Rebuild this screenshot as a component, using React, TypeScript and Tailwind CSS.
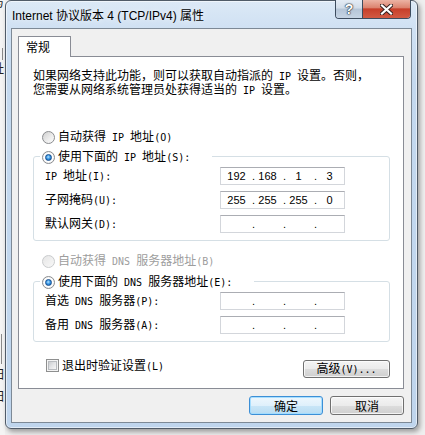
import React from "react";

function T({ s }: { s: string }) {
  const parts = s.match(/[\x20-\x7e]+|[^\x20-\x7e]+/g) || [];
  return (
    <>
      {parts.map((p, i) =>
        /^[\x20-\x7e]+$/.test(p) ? (
          <span key={i} className="whitespace-pre font-['DejaVu_Sans_Mono',monospace] text-[10px]">
            {p}
          </span>
        ) : (
          <span key={i}>{p}</span>
        )
      )}
    </>
  );
}

function Radio({ checked, disabled }: { checked?: boolean; disabled?: boolean }) {
  if (disabled) {
    return (
      <span className="inline-flex h-[13px] w-[13px] shrink-0 rounded-full border border-[#c9cbcd] bg-[linear-gradient(135deg,#e6e6e6,#f8f8f8)]" />
    );
  }
  return (
    <span
      className={
        "inline-flex h-[13px] w-[13px] shrink-0 items-center justify-center rounded-full border border-[#8a8c8f] " +
        (checked
          ? "bg-[radial-gradient(circle,#ffffff_55%,#d6d6d6_100%)]"
          : "bg-[linear-gradient(135deg,#cfcfcf_0%,#eeeeee_60%,#fbfbfb_100%)]")
      }
    >
      {checked && (
        <span className="h-[7px] w-[7px] rounded-full border border-[#174f8f] bg-[radial-gradient(circle_at_45%_40%,#b8e4ff_0%,#3b99e6_45%,#0e58a8_100%)]" />
      )}
    </span>
  );
}

function IPBox({ v }: { v?: string[] }) {
  return (
    <div className="flex h-[18px] w-[125px] items-center border border-[#d3d6db] border-t-[#abadb3] bg-white pl-[3px] font-['Liberation_Sans',sans-serif] text-[11px] leading-none text-black">
      {[0, 1, 2, 3].map((i) => (
        <React.Fragment key={i}>
          {i > 0 && <span className="w-[6px] text-right">.</span>}
          <span className="w-[25px] text-center">{v ? v[i] : ""}</span>
        </React.Fragment>
      ))}
    </div>
  );
}

function Row({ label, v, first }: { label: string; v?: string[]; first?: boolean }) {
  return (
    <div className={"flex h-[18px] items-center " + (first ? "mt-[2px]" : "mt-[6px]")}>
      <div className="ml-[11px] w-[175px] leading-[16px]">
        <T s={label} />
      </div>
      <IPBox v={v} />
    </div>
  );
}

function Legend({ text }: { text: string }) {
  return (
    <div className="-mt-[8px] ml-[6px] flex h-[16px] w-fit items-center gap-[3px] bg-white pl-[2px] pr-[22px] leading-[16px]">
      <Radio checked />
      <span>
        <T s={text} />
      </span>
    </div>
  );
}

function WinButton({ children, def, w, h }: { children: React.ReactNode; def?: boolean; w: string; h: string }) {
  return (
    <div
      className={
        "flex items-center justify-center rounded-[3px] border leading-none " +
        w +
        " " +
        h +
        " " +
        (def
          ? "border-[#3c8fd6] bg-[linear-gradient(to_bottom,#eef7fd_0%,#dff0fb_50%,#c9e6f7_50%,#b9dcf2_100%)] shadow-[inset_0_0_0_1px_rgba(160,220,255,0.9)]"
          : "border-[#707070] bg-[linear-gradient(to_bottom,#f4f4f4_0%,#ebebeb_50%,#dddddd_50%,#cfcfcf_100%)] shadow-[inset_0_0_0_1px_rgba(255,255,255,0.75)]")
      }
    >
      {children}
    </div>
  );
}

export default function App() {
  return (
    <div className="flex h-[435px] w-[425px] overflow-hidden bg-[#efefef] font-['Noto_Sans_CJK_SC',sans-serif] text-[12px] text-black">
      {/* background fragments of another window */}
      <div className="flex w-[5px] shrink-0 flex-col overflow-hidden bg-[#f4f4f4] leading-[12px] text-[#222]">
        <span className="-ml-[8px] -mt-[4px] text-[12px]">与</span>
        <span className="ml-[2px] mt-[40px] h-[12px] w-[1px] bg-[#8a8a8a]" />
        <span className="-ml-[8px] mt-[2px] text-[12px]">址</span>
        <span className="ml-[1px] mt-[260px] h-[30px] w-[1px] bg-[#8a8a8a]" />
        <span className="-ml-[7px] mt-[4px] text-[12px]">日</span>
        <span className="-ml-[7px] mt-[10px] text-[12px]">日</span>
      </div>

      {/* dialog window */}
      <div className="flex h-[429px] w-[413px] shrink-0 flex-col rounded-[6px] border border-[#505b68] bg-[linear-gradient(to_bottom,#dce9f6_0px,#d0e1f3_26px,#c4d9ef_80px,#bfd5ed_100%)] px-[5px] pb-[5px] shadow-[inset_0_0_0_1px_rgba(255,255,255,0.55),2px_3px_5px_rgba(0,0,0,0.35)]">
        {/* title bar */}
        <div className="flex h-[27px] shrink-0 items-start">
          <div className="ml-[1px] mt-[8px] font-['Liberation_Sans','Noto_Sans_CJK_SC',sans-serif] text-[12px] leading-[14px] text-black [text-shadow:0_0_6px_rgba(255,255,255,0.9)]">
            Internet 协议版本 4 (TCP/IPv4) 属性
          </div>
          <div className="-mt-[1px] ml-auto mr-[1px] flex h-[19px] overflow-hidden rounded-b-[4px] border border-t-0 border-[#3d4c5e]">
            <div className="flex h-full w-[27px] items-center justify-center border-r border-[#3d4c5e] bg-[linear-gradient(to_bottom,#e4ecf5_0%,#d2dde9_45%,#b5c5d7_50%,#c6d4e4_100%)] pb-[1px] font-['Liberation_Sans',sans-serif] text-[14px] font-bold leading-none text-white [text-shadow:0_0_1px_#1f2c3a,0_0_1px_#1f2c3a,0_0_2px_#1f2c3a]">
              ?
            </div>
            <div className="flex h-full w-[47px] items-center justify-center bg-[linear-gradient(to_bottom,#ecb3a4_0%,#dc8470_42%,#c73f2a_50%,#d25a43_100%)]">
              <svg width="13" height="11" viewBox="0 0 13 11">
                <path d="M2 1.5 L11 9.5 M11 1.5 L2 9.5" stroke="#3a2422" strokeWidth="4.2" strokeLinecap="square" fill="none" />
                <path d="M2 1.5 L11 9.5 M11 1.5 L2 9.5" stroke="#ffffff" strokeWidth="2.2" strokeLinecap="square" fill="none" />
              </svg>
            </div>
          </div>
        </div>

        {/* client area */}
        <div className="flex flex-1 flex-col border border-[#7d8996] bg-[#f0f0f0] pb-[7px] pl-[6px] pr-[7px] pt-[7px]">
          {/* tab */}
          <div className="relative z-10 -mb-[1px] flex h-[21px] w-[53px] items-center border border-b-0 border-[#898c95] bg-white pl-[7px] leading-[14px]">
            常规
          </div>
          {/* tab panel */}
          <div className="flex h-[333px] w-[386px] flex-col border border-[#898c95] bg-white pl-[14px]">
            <div className="mt-[12px] leading-[12px]">
              <div>
                <T s="如果网络支持此功能，则可以获取自动指派的 IP 设置。否则，" />
              </div>
              <div>
                <T s="您需要从网络系统管理员处获得适当的 IP 设置。" />
              </div>
            </div>

            <div className="ml-[9px] mt-[32px] flex h-[16px] items-center gap-[3px] leading-[16px]">
              <Radio />
              <span>
                <T s="自动获得 IP 地址(O)" />
              </span>
            </div>

            <div className="mt-[11px] w-[357px] rounded-[3px] border border-[#d5dfe5] pb-[7px]">
              <Legend text="使用下面的 IP 地址(S):" />
              <Row first label="IP 地址(I):" v={["192", "168", "1", "3"]} />
              <Row label="子网掩码(U):" v={["255", "255", "255", "0"]} />
              <Row label="默认网关(D):" />
            </div>

            <div className="ml-[9px] mt-[12px] flex h-[16px] items-center gap-[3px] leading-[16px] text-[#9d9d9d]">
              <Radio disabled />
              <span>
                <T s="自动获得 DNS 服务器地址(B)" />
              </span>
            </div>

            <div className="mt-[12px] w-[357px] rounded-[3px] border border-[#d5dfe5] pb-[7px]">
              <Legend text="使用下面的 DNS 服务器地址(E):" />
              <Row first label="首选 DNS 服务器(P):" />
              <Row label="备用 DNS 服务器(A):" />
            </div>

            <div className="mt-[18px] flex w-[357px] items-start justify-between">
              <div className="-mt-[1px] ml-[13px] flex h-[13px] items-center gap-[3px] leading-[14px]">
                <span className="flex h-[13px] w-[13px] shrink-0 items-center justify-center border border-[#8e8f8f] bg-[#f4f4f4]">
                  <span className="h-[9px] w-[9px] border border-[#b9bcc0] bg-[linear-gradient(135deg,#cbcdd0_0%,#e4e5e7_50%,#f6f6f6_100%)]" />
                </span>
                <span>
                  <T s="退出时验证设置(L)" />
                </span>
              </div>
              <WinButton w="w-[87px]" h="h-[18px]">
                <span className="leading-[14px]">
                  <T s="高级(V)..." />
                </span>
              </WinButton>
            </div>
          </div>

          {/* dialog buttons */}
          <div className="mt-[7px] flex justify-end gap-[7px]">
            <WinButton def w="w-[74px]" h="h-[19px]">
              <span className="leading-[14px]">确定</span>
            </WinButton>
            <WinButton w="w-[74px]" h="h-[19px]">
              <span className="leading-[14px]">取消</span>
            </WinButton>
          </div>
        </div>
      </div>
    </div>
  );
}
